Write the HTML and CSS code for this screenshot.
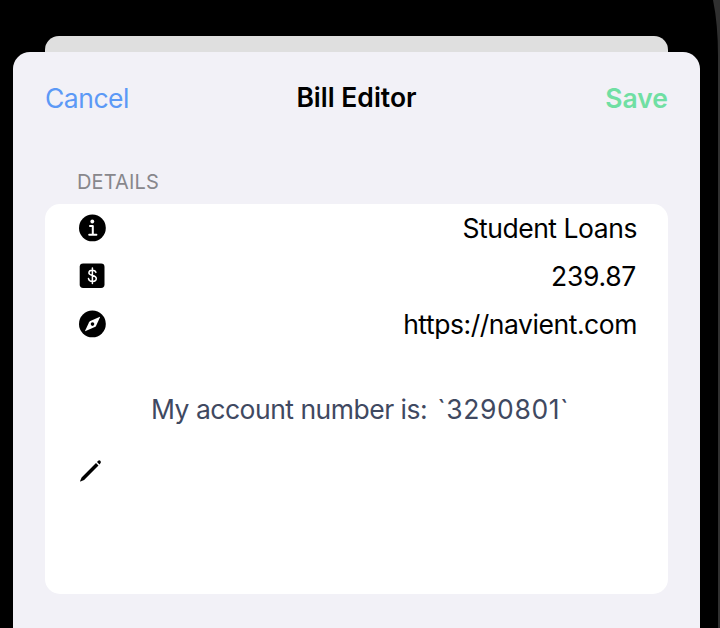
FILE: index.html
```
<!DOCTYPE html>
<html lang="en">
<head>
<meta charset="utf-8">
<title>Bill Editor</title>
<link rel="stylesheet" href="styles.css">
</head>
<body>
<div class="phone">
  <svg class="bezel" viewBox="0 0 8 628" aria-hidden="true"><path d="M1 0Q6 24 6 56V628H8V0Z" fill="#303030"/></svg>
  <div class="backdrop"></div>
  <main class="sheet">
    <header class="navbar">
      <span class="cancel">Cancel</span>
      <span class="title">Bill Editor</span>
      <span class="save">Save</span>
    </header>
    <h2 class="section-title">DETAILS</h2>
    <section class="card">
      <div class="row">
        <svg class="icon" viewBox="0 0 28 28"><circle cx="14.4" cy="13.9" r="13.4"/><circle class="light" cx="14.3" cy="7.5" r="1.9"/><path class="stroke" d="M12 12.1h2.8v8.4M11.2 20.8h7.2" stroke-width="2"/></svg>
        <span class="value name">Student Loans</span>
      </div>
      <div class="row">
        <svg class="icon" viewBox="0 0 28 28"><rect x="1.7" y="1.4" width="24.8" height="24.6" rx="3.4"/><path class="stroke" d="M17.9 10.4C17.5 8.9 16.2 8.2 14.4 8.2C12.3 8.2 10.9 9.2 10.9 10.8C10.9 14.6 18.3 12.4 18.3 16.5C18.3 18.3 16.7 19.4 14.5 19.4C12.3 19.4 10.8 18.4 10.5 16.6M14.4 6v15.6" stroke-width="1.5"/></svg>
        <span class="value amount">239.87</span>
      </div>
      <div class="row">
        <svg class="icon" viewBox="0 0 28 28"><circle cx="14.4" cy="13.9" r="13.4"/><path class="light" d="M21.4 6.9Q22.3 6.5 21.9 7.5L18 15.9Q17.6 16.7 16.8 17.1L7.7 21.1Q6.8 21.4 7.2 20.5L11.1 12.3Q11.5 11.5 12.3 11.1Z"/><circle cx="14.5" cy="14.1" r="1.8"/></svg>
        <span class="value url">https://navient.com</span>
      </div>
      <div class="notes">
        <svg class="icon" viewBox="0 0 28 28"><path d="M3.6 20.5L18 6.1L20.5 8.6L6.1 22.9L2.5 24.4Q1.9 24.6 2.1 24ZM19 5L20.2 3.7Q21.2 2.9 22.3 3.8Q23.4 4.9 22.6 6.1L21.5 7.4Z"/></svg>
        <p class="note">My account number is:<span class="account"> `3290801`</span></p>
      </div>
    </section>
  </main>
</div>
</body>
</html>
```

FILE: styles.css
```
* { box-sizing: border-box; }
body { margin: 0; background: #000; font-family: Inter, "Liberation Sans", sans-serif; }
.phone { position: relative; width: 720px; height: 628px; overflow: hidden; background: #000; padding-top: 36.4px; }
.bezel { position: absolute; right: 0; top: 0; width: 8px; height: 628px; }
.backdrop { margin: 0 52px 0 45px; height: 16px; background: #dfdfdf; border-radius: 14px 14px 0 0; }
.sheet { width: 687px; height: 576px; margin-left: 13px; padding: 0 32px; background: #f2f1f7; border-radius: 17px 17px 0 0; }
.navbar { display: grid; grid-template-columns: 1fr auto 1fr; align-items: start; height: 91px; padding-top: 28.6px; font-size: 26.5px; line-height: 32px; white-space: nowrap; }
.cancel { padding-top: 1px; color: #5c99f6; letter-spacing: -0.5px; }
.title { font-weight: 600; letter-spacing: 0; }
.save { justify-self: end; padding-top: 1px; color: #70dfa3; font-weight: 600; }
.section-title { margin: 25.6px 0 0; padding-left: 32px; height: 35px; font-size: 20px; line-height: 26px; font-weight: 400; letter-spacing: 0.15px; color: #88878c; }
.card { height: 390px; padding: 0 31px 0 33px; background: #fff; border-radius: 15px; color: #000; }
.row { display: flex; justify-content: space-between; align-items: center; height: 48px; }
.icon { width: 28px; height: 28px; flex: none; }
.light { fill: #fff; }
.stroke { fill: none; stroke: #fff; stroke-linecap: round; stroke-linejoin: round; }
.value { font-size: 26.5px; line-height: 32px; letter-spacing: -0.45px; }
.amount { padding-right: 1px; letter-spacing: -0.3px; }
.notes { display: flex; align-items: center; height: 246px; }
.note { align-self: flex-start; margin: 45px 0 0; padding-left: 45px; color: #3f4961; font-size: 26.5px; line-height: 32px; letter-spacing: -0.5px; white-space: pre; }
.account { padding-left: 2px; letter-spacing: 0.6px; }
```
